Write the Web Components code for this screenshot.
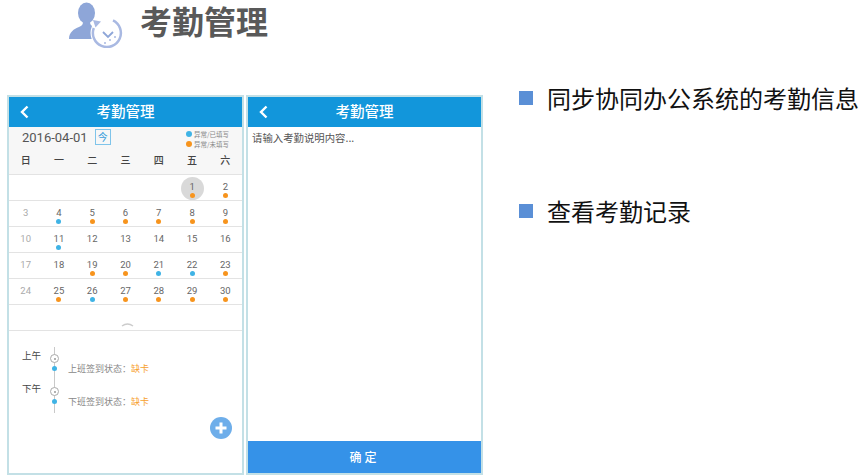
<!DOCTYPE html>
<html lang="zh">
<head>
<meta charset="utf-8">
<title>考勤管理</title>
<style>
  html, body { margin: 0; padding: 0; background: #fff; }
  body {
    width: 862px;
    height: 475px;
    overflow: hidden;
    font-family: "Noto Sans CJK SC", "Noto Sans", sans-serif;
  }
  .content { display: flex; align-items: flex-start; padding: 0 0 0 7px; }
  .notes { display: flex; flex-direction: column; gap: 80px; padding: 0 0 0 36px; margin-top: -14px; }
</style>
</head>
<body>
<slide-title>考勤管理</slide-title>
<div class="content">
  <phone-frame heading="考勤管理">
    <attendance-calendar></attendance-calendar>
    <punch-timeline></punch-timeline>
  </phone-frame>
  <phone-frame heading="考勤管理" style="margin-left:2px">
    <leave-note></leave-note>
  </phone-frame>
  <div class="notes">
    <bullet-item>同步协同办公系统的考勤信息</bullet-item>
    <bullet-item>查看考勤记录</bullet-item>
  </div>
</div>

<script>
class SlideTitle extends HTMLElement {
  constructor() {
    super();
    this.attachShadow({mode: 'open'}).innerHTML = `
      <style>
        :host { display: flex; align-items: flex-start; height: 95px; box-sizing: border-box; padding: 0 0 0 68px; }
        svg { display: block; flex: none; width: 55px; height: 48px; }
        h1 { margin: 0 0 0 17px; font: 700 32px/46px "Liberation Sans", "Noto Sans CJK SC", sans-serif; color: #595959; }
      </style>
      <svg viewBox="0 0 55 48">
        <ellipse cx="18.500" cy="13" rx="8.500" ry="10.500" fill="#8ea6d8"/>
        <path fill="#8ea6d8" d="M1 39c0-7 5-10 10-12 3-1 4-3 4-5h7c0 2 1 4 4 5l6 3v9z"/>
        <circle cx="39" cy="33" r="16.500" fill="#fff"/>
        <path fill="none" stroke="#a9b9e2" stroke-width="2.500" d="M45 20.400A14 14 0 1 1 25.800 28"/>
        <path fill="#a9b9e2" d="M25 20l8 1.500-5.500 6z"/>
        <path fill="none" stroke="#8ea6d8" stroke-width="1.800" d="M35 32l5 5 5-5"/>
        <circle cx="42" cy="40" r="1" fill="#a9b9e2"/>
        <circle cx="37" cy="43" r="1" fill="#a9b9e2"/>
        <circle cx="47" cy="37" r="1" fill="#a9b9e2"/>
      </svg>
      <h1><slot></slot></h1>`;
  }
}

class PhoneFrame extends HTMLElement {
  constructor() {
    super();
    this.attachShadow({mode: 'open'}).innerHTML = `
      <style>
        :host { display: flex; flex-direction: column; box-sizing: border-box; width: 237px; height: 380px; border: 2px solid #c3e0e6; background: #fff; }
        header { position: relative; flex: none; height: 30px; background: #1296db; color: #fff; text-align: center; font: 500 14.500px/28px "Noto Sans CJK SC", sans-serif; }
        svg { position: absolute; left: 11px; top: 8px; width: 9px; height: 14px; }
        .body { flex: 1; display: flex; flex-direction: column; min-height: 0; }
      </style>
      <header>
        <svg viewBox="0 0 9 14"><path d="M7.500 1.500 2 7l5.500 5.500" fill="none" stroke="#fff" stroke-width="2.400"/></svg>
        <span></span>
      </header>
      <div class="body"><slot></slot></div>`;
    this.shadowRoot.querySelector('span').textContent = this.getAttribute('heading');
  }
}

class DayCell extends HTMLElement {
  constructor() {
    super();
    this.attachShadow({mode: 'open'});
  }

  connectedCallback() {
    const mark = this.getAttribute('mark');
    this.shadowRoot.innerHTML = `
      <style>
        :host { display: flex; flex-direction: column; align-items: center; position: relative; height: 26px; padding-top: 7px; box-sizing: border-box; font: 9.500px/10px Roboto, sans-serif; color: #666; }
        :host([muted]) { color: #aaa; }
        :host([today])::before { content: ""; position: absolute; left: 50%; top: 2px; width: 23px; height: 23px; margin-left: -11.500px; border-radius: 50%; background: #d9d9d9; }
        span { position: relative; }
        i { position: relative; display: block; width: 5px; height: 5px; margin-top: 1px; border-radius: 50%; }
        i.o { background: #f7941d; }
        i.b { background: #3fb3e5; }
      </style>
      <span><slot></slot></span>${mark ? `<i class="${mark}"></i>` : ''}`;
  }
}

class AttendanceCalendar extends HTMLElement {
  constructor() {
    super();
    this.attachShadow({mode: 'open'}).innerHTML = `
      <style>
        :host { display: block; flex: none; font-family: "Noto Sans CJK SC", sans-serif; }
        .top { display: flex; align-items: flex-start; height: 25px; padding: 2px 13px 0 13px; background: #f7f7f7; }
        .date { font: 13px/18px Roboto, sans-serif; color: #555; }
        .today { box-sizing: border-box; width: 16px; height: 16px; margin-left: 7px; border: 1px solid #7fc4ea; color: #3aa0dc; font-size: 10px; line-height: 13px; text-align: center; }
        .legend { margin-left: auto; font-size: 6.500px; line-height: 10px; color: #888; }
        .legend div { display: flex; align-items: center; gap: 2px; }
        .legend i { width: 6px; height: 6px; border-radius: 50%; }
        .week { display: grid; grid-template-columns: repeat(7, 1fr); height: 21px; background: #f7f7f7; border-bottom: 1px solid #e3e3e3; box-sizing: border-box; text-align: center; font-size: 10px; font-weight: 500; line-height: 12px; color: #444; }
        .row { display: grid; grid-template-columns: repeat(7, 1fr); border-bottom: 1px solid #e3e3e3; height: 26px; box-sizing: border-box; }
        .fold { height: 26px; border-bottom: 1px solid #e3e3e3; box-sizing: border-box; position: relative; }
        .fold svg { position: absolute; left: 112px; top: 17px; width: 13px; height: 5px; }
      </style>
      <div class="top">
        <span class="date">2016-04-01</span>
        <span class="today">今</span>
        <div class="legend">
          <div><i style="background:#3fb3e5"></i>异常/已填写</div>
          <div><i style="background:#f7941d"></i>异常/未填写</div>
        </div>
      </div>
      <div class="week"><span>日</span><span>一</span><span>二</span><span>三</span><span>四</span><span>五</span><span>六</span></div>
      <div id="rows"></div>
      <div class="fold"><svg viewBox="0 0 13 5"><path d="M1 4q5.500-4 11 0" fill="none" stroke="#ccc" stroke-width="1.500"/></svg></div>`;

    const weeks = [
      [null, null, null, null, null, [1, 'o'], [2, 'o']],
      [[3], [4, 'b'], [5, 'o'], [6, 'o'], [7, 'o'], [8, 'o'], [9, 'o']],
      [[10], [11, 'b'], [12], [13], [14], [15], [16]],
      [[17], [18], [19, 'o'], [20, 'o'], [21, 'b'], [22, 'b'], [23, 'o']],
      [[24], [25, 'o'], [26, 'b'], [27, 'o'], [28, 'o'], [29, 'o'], [30, 'o']]
    ];
    const rows = this.shadowRoot.querySelector('#rows');
    weeks.forEach(week => {
      const row = document.createElement('div');
      row.className = 'row';
      week.forEach((d, col) => {
        const cell = document.createElement('day-cell');
        if (d) {
          cell.textContent = d[0];
          if (d[1]) cell.setAttribute('mark', d[1]);
          if (col === 0) cell.setAttribute('muted', '');
          if (d[0] === 1) cell.setAttribute('today', '');
        }
        row.appendChild(cell);
      });
      rows.appendChild(row);
    });
  }
}

class PunchTimeline extends HTMLElement {
  constructor() {
    super();
    this.attachShadow({mode: 'open'}).innerHTML = `
      <style>
        :host { display: block; position: relative; flex: 1; padding: 16px 0 0 13px; font-family: "Noto Sans CJK SC", sans-serif; }
        .line { position: absolute; left: 44.500px; top: 16px; width: 1px; height: 66px; background: #c9c9c9; }
        .slot { display: grid; grid-template-columns: 32px 14px 1fr; grid-template-rows: 19px 14px; height: 33px; }
        .label { font-size: 9.500px; line-height: 16px; color: #444; }
        .ring { position: relative; box-sizing: border-box; width: 9px; height: 9px; margin: 7px 0 0 -4px; border: 1px solid #aaa; border-radius: 50%; background: #fff; }
        .ring::after { content: ""; position: absolute; left: 2.500px; top: 2.500px; width: 2px; height: 2px; border-radius: 50%; background: #999; }
        .dot { position: relative; grid-column: 2; width: 5px; height: 5px; margin: 0 0 0 -2px; border-radius: 50%; background: #3fb3e5; }
        .text { grid-column: 3; grid-row: 2; margin-top: -4px; font-size: 9px; line-height: 13px; color: #888; white-space: nowrap; }
        .text b { font-weight: 400; color: #f7a12e; }
        .add { position: absolute; left: 201px; top: 86px; width: 22px; height: 22px; }
      </style>
      <div class="line"></div>
      <div class="slot">
        <span class="label">上午</span><span class="ring"></span><span></span>
        <span></span><span class="dot"></span><span class="text">上班签到状态：<b>缺卡</b></span>
      </div>
      <div class="slot">
        <span class="label">下午</span><span class="ring"></span><span></span>
        <span></span><span class="dot"></span><span class="text">下班签到状态：<b>缺卡</b></span>
      </div>
      <svg class="add" viewBox="0 0 22 22"><circle cx="11" cy="11" r="11" fill="#6eaeea"/><path d="M11 5.500v11M5.500 11h11" stroke="#fff" stroke-width="3"/></svg>`;
  }
}

class LeaveNote extends HTMLElement {
  constructor() {
    super();
    this.attachShadow({mode: 'open'}).innerHTML = `
      <style>
        :host { display: flex; flex-direction: column; flex: 1; font-family: "Noto Sans CJK SC", sans-serif; }
        p { flex: 1; margin: 0; padding: 4px 0 0 4px; font-size: 10.400px; line-height: 14px; color: #555; }
        button { flex: none; height: 32px; border: 0; padding: 0 0 2px; background: #3592e8; color: #fff; font: 500 12px "Noto Sans CJK SC", sans-serif; letter-spacing: 3px; }
      </style>
      <p>请输入考勤说明内容...</p>
      <button>确定</button>`;
  }
}

class BulletItem extends HTMLElement {
  constructor() {
    super();
    this.attachShadow({mode: 'open'}).innerHTML = `
      <style>
        :host { display: flex; align-items: center; height: 33px; font: 24px/33px "Noto Sans CJK SC", sans-serif; color: #111; white-space: nowrap; }
        i { flex: none; width: 14px; height: 14px; margin-right: 14px; background: #5a8fd6; }
      </style>
      <i></i><slot></slot>`;
  }
}

customElements.define('slide-title', SlideTitle);
customElements.define('phone-frame', PhoneFrame);
customElements.define('day-cell', DayCell);
customElements.define('attendance-calendar', AttendanceCalendar);
customElements.define('punch-timeline', PunchTimeline);
customElements.define('leave-note', LeaveNote);
customElements.define('bullet-item', BulletItem);
</script>
</body>
</html>
